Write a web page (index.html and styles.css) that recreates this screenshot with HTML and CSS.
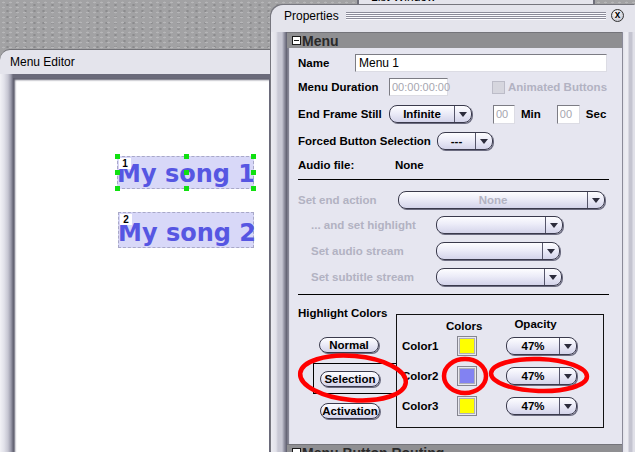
FILE: index.html
```html
<!DOCTYPE html>
<html>
<head>
  <title>Menu Editor</title>
  <link rel="stylesheet" href="styles.css">
</head>
<body>
  <div class="win list-win"><span class="list-title">List Window</span></div>

  <div class="win editor-win">
      <div class="win-title">Menu Editor</div>
      <div class="editor-body">
          <div class="canvas">
              <div class="song song1">
                  <span class="song-num">1</span>My song 1
                  <i class="grip g-tl"></i><i class="grip g-tc"></i><i class="grip g-tr"></i>
                  <i class="grip g-ml"></i><i class="grip g-mc"></i><i class="grip g-mr"></i>
                  <i class="grip g-bl"></i><i class="grip g-bc"></i><i class="grip g-br"></i>
              </div>
              <div class="song song2">
                  <span class="song-num">2</span>My song 2
              </div>
          </div>
      </div>
  </div>

  <div class="win props-win">
      <div class="props-title">
          <span>Properties</span>
          <span class="grooves"></span>
          <span class="close">x</span>
      </div>
      <div class="props-body">
          <div class="panel">
              <div class="panel-head"><span class="minus"></span>Menu</div>
              <div class="panel-body">
                  <div class="row">
                      <span class="lbl lbl-name">Name</span>
                      <span class="field name-field">Menu 1</span>
                  </div>
                  <div class="row">
                      <span class="lbl lbl-mid">Menu Duration</span>
                      <span class="field dur-field off">00:00:00:00</span>
                      <span class="check"></span>
                      <span class="lbl dim">Animated Buttons</span>
                  </div>
                  <div class="row row-tall">
                      <span class="lbl lbl-mid">End Frame Still</span>
                      <span class="combo combo-still"><span class="combo-text">Infinite</span><span class="combo-arrow"></span></span>
                      <span class="field num-field off first">00</span>
                      <span class="lbl unit">Min</span>
                      <span class="field num-field off second">00</span>
                      <span class="lbl unit">Sec</span>
                  </div>
                  <div class="row">
                      <span class="lbl lbl-long">Forced Button Selection</span>
                      <span class="combo combo-forced"><span class="combo-text">---</span><span class="combo-arrow"></span></span>
                  </div>
                  <div class="row">
                      <span class="lbl lbl-audio">Audio file:</span>
                      <span class="lbl">None</span>
                  </div>

                  <div class="rule"></div>

                  <div class="row">
                      <span class="lbl lbl-action dim">Set end action</span>
                      <span class="combo combo-action"><span class="combo-text dim">None</span><span class="combo-arrow"></span></span>
                  </div>
                  <div class="row row-sub">
                      <span class="lbl lbl-sub dim">... and set highlight</span>
                      <span class="combo combo-hl"><span class="combo-text"></span><span class="combo-arrow"></span></span>
                  </div>
                  <div class="row row-sub">
                      <span class="lbl lbl-sub dim">Set audio stream</span>
                      <span class="combo combo-audio"><span class="combo-text"></span><span class="combo-arrow"></span></span>
                  </div>
                  <div class="row row-sub">
                      <span class="lbl lbl-sub dim">Set subtitle stream</span>
                      <span class="combo combo-sub"><span class="combo-text"></span><span class="combo-arrow"></span></span>
                  </div>

                  <div class="rule rule-end"></div>

                  <div class="hl">
                      <div class="hl-left">
                          <div class="lbl hl-title">Highlight Colors</div>
                          <span class="pill pill-normal">Normal</span>
                          <div class="sel-frame">
                              <span class="pill">Selection</span>
                          </div>
                          <span class="pill pill-act">Activation</span>
                      </div>
                      <div class="hl-box">
                          <div class="box-head">
                              <span class="lbl head-colors">Colors</span>
                              <span class="lbl head-opacity">Opacity</span>
                          </div>
                          <div class="crow">
                              <span class="lbl clbl">Color1</span>
                              <span class="swatch yellow"></span>
                              <span class="combo combo-op"><span class="combo-text">47%</span><span class="combo-arrow"></span></span>
                          </div>
                          <div class="crow">
                              <span class="lbl clbl">Color2</span>
                              <span class="swatch violet"></span>
                              <span class="combo combo-op"><span class="combo-text">47%</span><span class="combo-arrow"></span></span>
                          </div>
                          <div class="crow">
                              <span class="lbl clbl">Color3</span>
                              <span class="swatch yellow"></span>
                              <span class="combo combo-op"><span class="combo-text">47%</span><span class="combo-arrow"></span></span>
                          </div>
                      </div>
                  </div>
              </div>
              <div class="panel-head panel-head-next"><span class="minus"></span>Menu Button Routing</div>
          </div>
      </div>
  </div>

  <svg class="marks" width="635" height="452" viewBox="0 0 635 452">
      <ellipse cx="353" cy="378" rx="53" ry="22" transform="rotate(5 353 378)"></ellipse>
      <ellipse cx="465" cy="376" rx="21" ry="17"></ellipse>
      <ellipse cx="539" cy="375" rx="48" ry="16" transform="rotate(2 539 375)"></ellipse>
  </svg>
</body>
</html>
```

FILE: styles.css
```css
body {
margin: 0;
width: 635px;
height: 452px;
overflow: hidden;
position: relative;
background-color: #a2a2a4;
background-image: radial-gradient(#b6b6b8 1px, transparent 1.6px), radial-gradient(#8c8c8e 1px, transparent 1.6px);
background-size: 7px 5px, 9px 6px;
background-position: 0 0, 3px 2px;
font-family: "Liberation Sans", Arial, sans-serif;
font-size: 12px;
color: #000;
}
.win {
position: absolute;
background: #e4e4ec;
box-sizing: border-box;
}

/* window peeking behind */
.list-win {
left: 357px;
top: -10px;
width: 238px;
height: 15px;
border-left: 2px solid #6e6e7a;
border-right: 2px solid #6e6e7a;
border-bottom: 1px solid #8a8a96;
}
.list-title {
display: block;
padding-left: 12px;
line-height: 14px;
}

/* menu editor */
.editor-win {
left: 0;
top: 50px;
width: 290px;
height: 402px;
border-radius: 10px 0 0 0;
box-shadow: 0 -1px 0 #737378;
}
.win-title {
height: 24px;
line-height: 24px;
padding-left: 10px;
}
.editor-body {
height: 378px;
padding: 4px 0 0 13px;
background: linear-gradient(90deg, #f2f2f6 0, #e2e2ea 4px, #c6c6d2 8px, #9a9aaa 11px, #6a6a7a 13px);
}
.canvas {
position: relative;
width: 257px;
height: 380px;
box-sizing: border-box;
background: #fff;
border-right: 1px solid #6a6a7a;
box-shadow: inset 3px 3px 2px -1px #5e5e6e;
}
.song {
position: absolute;
box-sizing: border-box;
background: #d8d8f8;
border: 1px dashed #a8a8c8;
color: #5656e2;
font-family: "DejaVu Sans", sans-serif;
font-size: 24px;
font-weight: bold;
white-space: nowrap;
text-indent: -1px;
}
.song1 {
left: 104px;
top: 78px;
width: 137px;
height: 33px;
line-height: 35px;
}
.song2 {
left: 105px;
top: 134px;
width: 136px;
height: 36px;
line-height: 40px;
}
.song-num {
position: absolute;
left: 1px;
top: 1px;
width: 12px;
height: 11px;
background: #fff;
color: #000;
font-family: "Liberation Sans", Arial, sans-serif;
font-size: 10px;
line-height: 11px;
text-align: center;
text-indent: 0;
}
.grip {
position: absolute;
width: 5px;
height: 5px;
background: #10e010;
}
.g-tl, .g-ml, .g-bl { left: -3px; }
.g-tc, .g-mc, .g-bc { left: 66px; }
.g-tr, .g-mr, .g-br { right: -3px; }
.g-tl, .g-tc, .g-tr { top: -3px; }
.g-ml, .g-mc, .g-mr { top: 13px; }
.g-bl, .g-bc, .g-br { bottom: -3px; }

/* properties */
.props-win {
left: 271px;
top: 5px;
width: 364px;
height: 447px;
border-radius: 12px 0 0 0;
box-shadow: -1px -1px 0 #76767e;
display: flex;
flex-direction: column;
}
.props-title {
display: flex;
align-items: center;
height: 21px;
padding: 0 11px 0 13px;
margin-bottom: 6px;
flex: none;
}
.grooves {
flex: 1;
height: 8px;
margin: 0 5px 0 7px;
background: repeating-linear-gradient(to bottom, #8c8c9a 0, #8c8c9a 1px, #fbfbff 1px, #fbfbff 2px);
}
.close {
width: 13px;
height: 13px;
box-sizing: border-box;
border: 1px solid #333;
border-radius: 50%;
background: radial-gradient(circle at 40% 35%, #fff, #b8b8c4);
font-size: 10px;
font-weight: bold;
line-height: 10px;
text-align: center;
}
.props-body {
flex: 1;
display: flex;
padding-left: 16px;
background: linear-gradient(90deg, #ececf2 0, #e2e2ea 5px, #c8c8d4 7px, #c8c8d4 11px, #9898a8 13px, #5c5c6c 16px, #e4e4ec 16px, #e4e4ec 353px, #ececf2 354px, #ececf2 357px, #c4c4d0 358px, #c4c4d0 361px, #e0e0e8 362px);
}
.panel {
width: 336px;
flex: none;
background: #e6e6f0;
overflow: hidden;
border-right: 1px solid #8a8a98;
box-sizing: border-box;
box-shadow: inset 2px 0 1px #7a7a8a;
}
.panel-head {
display: flex;
align-items: center;
height: 16px;
padding-left: 5px;
background: #8f8f92;
border-top: 1px solid #74747a;
box-sizing: border-box;
color: #2a2a2a;
font-size: 14px;
font-weight: bold;
}
.minus {
width: 9px;
height: 9px;
box-sizing: border-box;
margin-right: 1px;
border: 1px solid #1a1a1a;
background: #fff linear-gradient(#1a1a1a, #1a1a1a) center / 5px 1px no-repeat;
}
.panel-head-next {
margin-top: 16px;
}
.panel-body {
padding: 3px 13px 0 11px;
}
.row {
display: flex;
align-items: center;
height: 24px;
}
.row-tall {
height: 30px;
}
.row-sub {
height: 26px;
padding-left: 13px;
}
.lbl {
flex: none;
font-size: 11.5px;
font-weight: bold;
line-height: 13px;
white-space: nowrap;
}
.dim {
color: #b2b2c2;
}
.lbl-name { width: 57px; }
.lbl-mid { width: 91px; }
.lbl-long { width: 139px; }
.lbl-audio { width: 97px; }
.lbl-action { width: 100px; }
.lbl-sub { width: 125px; }

.field {
flex: none;
box-sizing: border-box;
height: 18px;
padding-left: 3px;
border: 1px solid;
border-color: #7c7c84 #dcdce4 #dcdce4 #7c7c84;
background: #fff;
font-size: 12px;
line-height: 16px;
}
.field.off {
color: #a6a6b0;
font-size: 11px;
padding-left: 2px;
}
.name-field { width: 252px; }
.dur-field { width: 59px; }
.num-field {
width: 22px;
height: 19px;
}
.num-field.first { margin-left: 21px; }
.num-field.second { margin-left: 16px; width: 23px; }
.unit { margin-left: 6px; }
.check {
width: 13px;
height: 13px;
box-sizing: border-box;
margin: 0 3px 0 44px;
background: #d6d6de;
border: 1px solid #bcbcc8;
}

.combo {
flex: none;
display: flex;
height: 18px;
box-sizing: border-box;
border: 1px solid #3a3a4c;
border-radius: 8px;
background: linear-gradient(#fdfdff, #ececf8 45%, #d4d4ea);
box-shadow: 1px 1px 0 #6c6c80;
}
.combo-text {
flex: 1;
text-align: center;
font-size: 11.5px;
font-weight: bold;
line-height: 16px;
}
.combo-arrow {
width: 16px;
border-left: 1px solid #55556a;
display: flex;
align-items: center;
justify-content: center;
}
.combo-arrow::after {
content: '';
border-left: 4px solid transparent;
border-right: 4px solid transparent;
border-top: 5px solid #2c2c3c;
}
.combo-still { width: 83px; }
.combo-forced { width: 56px; }
.combo-action { width: 207px; }
.combo-hl { width: 127px; }
.combo-audio { width: 124px; }
.combo-sub { width: 126px; }
.combo-op { width: 71px; margin-left: 29px; }

.rule {
height: 1px;
background: #000;
margin: 2px 0 8px;
}
.rule-end {
margin: 4px 0 0;
}

/* highlight colors */
.hl {
display: flex;
align-items: flex-start;
margin-top: 12px;
}
.hl-left {
width: 98px;
flex: none;
}
.pill {
display: block;
width: 60px;
height: 16px;
box-sizing: border-box;
border: 1px solid #3a3a4c;
border-radius: 8px;
background: linear-gradient(#fdfdff, #ececf8 45%, #d4d4ea);
box-shadow: 1px 1px 0 #6c6c80;
font-size: 11.5px;
font-weight: bold;
line-height: 14px;
text-align: center;
}
.pill-normal {
margin: 17px 0 0 21px;
}
.pill-act {
margin: 9px 0 0 22px;
}
.sel-frame {
width: 84px;
height: 31px;
box-sizing: border-box;
margin: 10px 0 0 15px;
padding: 7px 0 0 6px;
border: 1px solid #000;
}
.hl-box {
width: 208px;
flex: none;
box-sizing: border-box;
margin-top: 7px;
padding-bottom: 6px;
border: 1px solid #111;
}
.box-head {
display: flex;
align-items: flex-end;
height: 16px;
padding-left: 49px;
}
.head-colors {
margin-bottom: -2px;
}
.head-opacity {
margin-left: 32px;
}
.crow {
display: flex;
align-items: center;
height: 30px;
padding-left: 5px;
}
.clbl {
width: 55px;
}
.swatch {
flex: none;
width: 20px;
height: 20px;
box-sizing: border-box;
border: 1px solid #858590;
box-shadow: inset 0 0 0 1px #e8e8ee, inset 0 0 0 2px #b0b0b8;
}
.yellow { background: #ffff00; }
.violet { background: #8282f2; }

.marks {
position: absolute;
left: 0;
top: 0;
pointer-events: none;
}
.marks ellipse {
fill: none;
stroke: #ff0000;
stroke-width: 4.5;
}
```
